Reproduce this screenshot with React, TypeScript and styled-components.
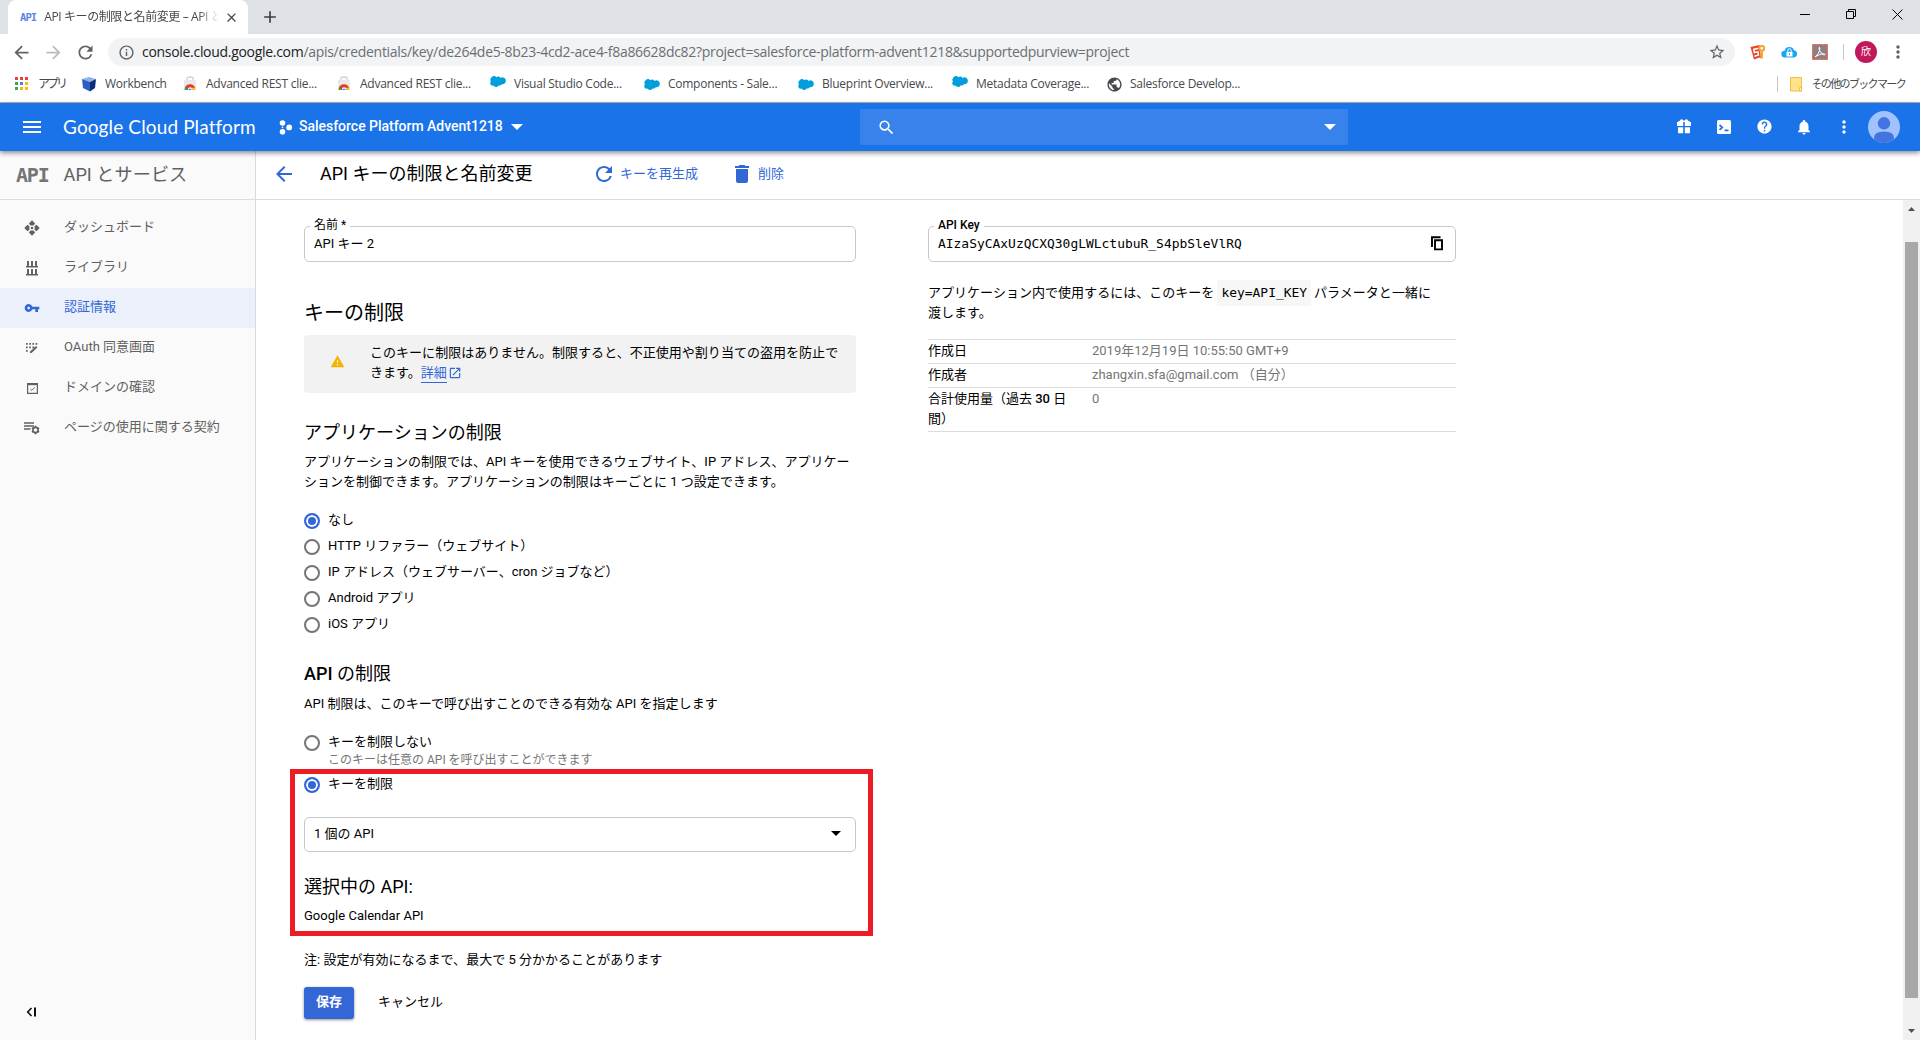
import React from "react";
import styled, { createGlobalStyle } from "styled-components";
import {
  MdArrowBack, MdArrowForward, MdRefresh, MdInfoOutline, MdStarBorder, MdMoreVert, MdClose, MdAdd,
  MdMenu, MdSearch, MdHelp, MdNotifications, MdDelete, MdVpnKey, MdWarning, MdOpenInNew, MdPublic,
} from "react-icons/md";

const GlobalStyle = createGlobalStyle`
  *, *::before, *::after { box-sizing: border-box; }
  body { margin: 0; background: #fff; overflow: hidden; }
  svg { display: block; flex: none; }
`;

const UI_FONT = `"Open Sans", "Noto Sans CJK JP", sans-serif`;
const PAGE_FONT = `Roboto, "Noto Sans CJK JP", sans-serif`;
const MONO_FONT = `"DejaVu Sans Mono", "Noto Sans CJK JP", monospace`;
const BLUE = "#3367d6";

const Window = styled.div`
  width: 1920px;
  height: 1040px;
  display: flex;
  flex-direction: column;
  overflow: hidden;
  font-family: ${PAGE_FONT};
  font-size: 13px;
  line-height: 20px;
  color: #000;
  white-space: nowrap;
`;

/* ---------- browser frame ---------- */

const TabStrip = styled.div`
  height: 34px;
  flex: none;
  display: flex;
  background: #dee1e6;
  padding-left: 8px;
  font-family: ${UI_FONT};
`;

const Tab = styled.div`
  width: 240px;
  display: flex;
  align-items: center;
  background: #fff;
  border-radius: 8px 8px 0 0;
  padding: 0 9px 0 12px;
  color: #45494d;
`;

const TabTitle = styled.div`
  flex: 1;
  margin: 0 5px 0 8px;
  overflow: hidden;
  font-size: 12px;
  letter-spacing: -0.4px;
  mask-image: linear-gradient(to right, #000 88%, transparent 100%);
`;

const NewTab = styled.div`
  display: flex;
  align-items: center;
  padding-left: 12px;
  color: #3c4043;
`;

const WindowButtons = styled.div`
  margin-left: auto;
  display: flex;
  align-items: center;
  gap: 35px;
  height: 28px;
  padding-right: 17px;
`;

const ApiMark = styled.span<{ $size: number; $color: string; $squeeze: number }>`
  font-family: ${MONO_FONT};
  font-weight: 700;
  font-size: ${(p) => p.$size}px;
  color: ${(p) => p.$color};
  letter-spacing: ${(p) => p.$squeeze}px;
`;

const Toolbar = styled.div`
  height: 36px;
  flex: none;
  display: flex;
  align-items: center;
  padding-left: 11px;
  color: #5f6368;
  font-family: ${UI_FONT};
`;

const NavButton = styled.div<{ $dim?: boolean }>`
  width: 32px;
  flex: none;
  display: flex;
  color: ${(p) => (p.$dim ? "#babcbe" : "#5f6368")};
`;

const Omnibox = styled.div`
  width: 1627px;
  flex: none;
  height: 28px;
  margin-left: 1px;
  border-radius: 14px;
  background: #f1f3f4;
  display: flex;
  align-items: center;
  padding: 0 9px 0 10px;
`;

const Url = styled.div`
  flex: 1;
  margin-left: 7px;
  font-size: 14px;
  letter-spacing: -0.3px;
  color: #6b6f73;

  b {
    font-weight: 400;
    color: #202124;
  }
`;

const Extensions = styled.div`
  flex: 1;
  display: flex;
  align-items: center;
  padding-left: 15px;
`;

const ExtensionSlot = styled.div`
  width: 31px;
`;

const VerticalRule = styled.div`
  width: 1px;
  height: 16px;
  background: #c6c9cc;
`;

const Profile = styled.div`
  width: 22px;
  flex: none;
  height: 22px;
  margin-left: 11px;
  border-radius: 50%;
  background: #c2185b;
  color: #fff;
  font-size: 10px;
  line-height: 21px;
  text-align: center;
`;

const BookmarksBar = styled.div`
  height: 33px;
  flex: none;
  display: flex;
  align-items: center;
  padding: 0 15px 4px;
  border-bottom: 1px solid #b1b3b5;
  font-family: ${UI_FONT};
  font-size: 12px;
  color: #46494d;
`;

const Bookmark = styled.div<{ $width?: number; $gap?: number; $tight?: number }>`
  width: ${(p) => (p.$width ? `${p.$width}px` : "auto")};
  display: flex;
  align-items: center;
  gap: ${(p) => p.$gap ?? 8}px;
  letter-spacing: ${(p) => p.$tight ?? -0.26}px;
`;

const OtherBookmarks = styled.div`
  margin-left: auto;
  display: flex;
  align-items: center;
  gap: 12px;
`;

const FolderLabel = styled.span`
  margin-left: -3px;
  font-size: 11px;
  letter-spacing: -1.65px;
`;

const Raised = styled.span`
  padding-bottom: 5px;
`;

/* ---------- platform bar ---------- */

const PlatformBar = styled.header`
  position: relative;
  z-index: 2;
  height: 48px;
  flex: none;
  display: flex;
  align-items: center;
  padding: 0 20px;
  background: #1a73e8;
  color: #fff;
  box-shadow: 0 2px 5px rgba(0, 0, 0, 0.45);
`;

const Brand = styled.div`
  width: 216px;
  margin-left: 19px;
  font-family: Lato, sans-serif;
  font-size: 19px;
  letter-spacing: 0.12px;
`;

const Project = styled.div`
  width: 581px;
  display: flex;
  align-items: center;
  font-weight: 500;
  font-size: 14px;
  letter-spacing: -0.02px;
`;

const ProjectName = styled.span`
  width: 212px;
  margin-left: 6px;
  padding-bottom: 2px;
`;

const SearchBox = styled.div`
  width: 488px;
  height: 36px;
  display: flex;
  align-items: center;
  justify-content: space-between;
  padding: 0 12px 0 17px;
  border-radius: 2px;
  background: #3783eb;
`;

const PlatformTools = styled.div`
  margin-left: auto;
  display: flex;
  align-items: center;
`;

const ToolSlot = styled.div`
  width: 40px;
  display: flex;
  justify-content: center;
  padding-bottom: 1px;
`;

const AvatarSlot = styled.div`
  margin-left: 4px;
`;

const Caret = styled.i<{ $w?: number }>`
  width: 0;
  height: 0;
  border: ${(p) => p.$w ?? 6}px solid transparent;
  border-top-color: currentColor;
  border-bottom: 0;
`;

/* ---------- body ---------- */

const Body = styled.div`
  flex: 1;
  min-height: 0;
  display: flex;
`;

const Sidebar = styled.nav`
  width: 256px;
  flex: none;
  display: flex;
  flex-direction: column;
  background: #fafafa;
  border-right: 1px solid #dadada;
`;

const SidebarHeader = styled.div`
  height: 49px;
  flex: none;
  display: flex;
  align-items: center;
  margin-bottom: 8px;
  padding: 0 0 1px 16px;
  border-bottom: 1px solid #dcdcdc;
  font-size: 18.200px;
  color: #616161;
`;

const SectionName = styled.span`
  margin-left: 15px;
`;

const NavItem = styled.div<{ $active?: boolean }>`
  height: 40px;
  display: flex;
  align-items: center;
  background: ${(p) => (p.$active ? "#ebf0fa" : "transparent")};
  color: ${(p) => (p.$active ? BLUE : "#616161")};
`;

const NavIcon = styled.span`
  width: 64px;
  display: flex;
  justify-content: center;
  color: inherit;
`;

const NavLabel = styled.span`
  padding-bottom: 3px;
`;

const Collapse = styled.div`
  margin-top: auto;
  padding: 0 0 23px 26px;
`;

const Main = styled.main`
  flex: 1;
  display: flex;
  flex-direction: column;
`;

const ActionBar = styled.div`
  height: 49px;
  flex: none;
  display: flex;
  align-items: center;
  padding: 0 0 2px 16px;
  border-bottom: 1px solid #dcdcdc;
  color: ${BLUE};
`;

const PageTitle = styled.h1`
  width: 272px;
  margin: 0 0 0 24px;
  font-size: 18px;
  font-weight: 400;
  color: #000;
`;

const Action = styled.div<{ $width: number }>`
  width: ${(p) => p.$width}px;
  display: flex;
  align-items: center;
  gap: 4px;
`;

const Scroller = styled.div`
  flex: 1;
  min-height: 0;
  display: flex;
`;

const Content = styled.div`
  flex: 1;
  display: flex;
  align-items: flex-start;
  gap: 72px;
  padding: 26px 0 0 48px;
`;

const Scrollbar = styled.div`
  width: 17px;
  display: flex;
  flex-direction: column;
  align-items: center;
  justify-content: space-between;
  padding: 7px 0;
  background: #f0f0f0;
  color: #505050;
`;

const Thumb = styled.div`
  width: 13px;
  height: 756px;
  margin: 31px 0 auto;
  background: #a8a8a8;
`;

const FormColumn = styled.form`
  width: 552px;
`;

const Field = styled.div`
  position: relative;
  height: 36px;
  display: flex;
  align-items: center;
  justify-content: space-between;
  padding: 0 12px 1px 9px;
  border: 1px solid #c8c8c8;
  border-radius: 5px;
`;

const FieldLabel = styled.label<{ $bold?: boolean }>`
  position: absolute;
  left: 5px;
  top: -10px;
  padding: 0 4px;
  background: #fff;
  font-size: 12px;
  line-height: 16px;
  font-weight: ${(p) => (p.$bold ? 500 : 400)};
`;

const Heading = styled.h2<{ $size?: number; $top: number; $bottom: number }>`
  margin: ${(p) => p.$top}px 0 ${(p) => p.$bottom}px;
  font-size: ${(p) => p.$size ?? 18}px;
  font-weight: 400;
  line-height: 24px;

  strong {
    font-weight: 500;
  }
`;

const Notice = styled.div`
  height: 58px;
  display: flex;
  align-items: center;
  padding: 0 0 2px 26px;
  border-radius: 4px;
  background: #f2f2f2;
`;

const NoticeIcon = styled.span`
  padding-bottom: 4px;
  color: #f4b400;
`;

const NoticeText = styled.p`
  margin: 0 0 0 25px;
  letter-spacing: 0.03px;
`;

const DetailLink = styled.a`
  display: inline-flex;
  align-items: center;
  gap: 1px;
  color: ${BLUE};
  vertical-align: top;
  height: 20px;
`;

const LinkText = styled.span`
  line-height: 19px;
  border-bottom: 1px solid ${BLUE};
`;

const Paragraph = styled.p<{ $bottom?: number }>`
  margin: 0 0 ${(p) => p.$bottom ?? 0}px;
  letter-spacing: 0.02px;
`;

const RadioRow = styled.label`
  height: 26px;
  display: flex;
  align-items: center;
  gap: 8px;
`;

const RadioDot = styled.span<{ $on?: boolean }>`
  width: 16px;
  height: 16px;
  flex: none;
  border-radius: 50%;
  border: 2px solid ${(p) => (p.$on ? BLUE : "#757575")};
  background: ${(p) => (p.$on ? BLUE : "#fff")};
  box-shadow: inset 0 0 0 2px #fff;
`;

const RadioText = styled.span`
  padding-bottom: 2px;
`;

const Hint = styled.div`
  height: 16px;
  padding-left: 24px;
  font-size: 12px;
  line-height: 9px;
  color: #757575;
`;

const RestrictedGroup = styled.section`
  position: relative;
`;

const Highlight = styled.div`
  position: absolute;
  left: -14px;
  top: -3px;
  width: 583px;
  height: 167px;
  border: 5px solid #ed1c24;
`;

const Select = styled(Field)`
  margin-top: 19px;
  height: 35px;
  padding: 0 14px 2px 9px;
`;

const Buttons = styled.div`
  display: flex;
  align-items: center;
  gap: 24px;
`;

const SaveButton = styled.div`
  width: 50px;
  height: 32px;
  border-radius: 3px;
  background: ${BLUE};
  box-shadow: 0 1px 3px rgba(0, 0, 0, 0.45);
  color: #fff;
  font-weight: 700;
  line-height: 30px;
  text-align: center;
`;

const CancelButton = styled.div`
  padding-bottom: 2px;
`;

const InfoColumn = styled.aside`
  width: 528px;
`;

const KeyValue = styled.span`
  font-family: ${MONO_FONT};
  font-size: 12.95px;
`;

const Usage = styled.p`
  margin: 21px 0 16px;
  letter-spacing: 0.03px;
`;

const Code = styled.code`
  display: inline-block;
  height: 26px;
  margin: -3px 3px;
  padding: 0 4px;
  background: #f7f7f7;
  font-family: ${MONO_FONT};
  font-size: 12.95px;
  letter-spacing: 0;
  line-height: 26px;
`;

const Details = styled.dl`
  margin: 0;
  border-top: 1px solid #dcdcdc;
`;

const DetailRow = styled.div`
  display: grid;
  grid-template-columns: 164px 1fr;
  padding: 1px 0 2px;
  border-bottom: 1px solid #dcdcdc;
`;

const Term = styled.dt`
  width: 142px;
  white-space: normal;

  strong {
    font-weight: 500;
  }
`;

const Value = styled.dd`
  margin: 0;
  color: #757575;
`;

/* ---------- drawings ---------- */

const AppsGrid = () => (
  <svg width="14" height="14" viewBox="0 0 14 14">
    {["#ea4335", "#ea4335", "#ea4335", "#34a853", "#4285f4", "#fbbc05", "#34a853", "#fbbc05", "#fbbc05"].map((c, i) => (
      <rect key={i} x={(i % 3) * 5} y={Math.floor(i / 3) * 5} width="3" height="3" fill={c} />
    ))}
  </svg>
);

const Cube = () => (
  <svg width="16" height="16" viewBox="0 0 16 16">
    <path d="M1 3l7-2 7 2-6 3z" fill="#8fb4ea" />
    <path d="M1 3l8 3v9.500L2 12z" fill="#2a5fc4" />
    <path d="M9 6l6-3-1 9-5 3.500z" fill="#0b2f7c" />
  </svg>
);

const WebStore = () => (
  <svg width="14" height="16" viewBox="0 0 14 16">
    <path d="M4 4V2.500Q4 1 7 1t3 1.500V4" fill="none" stroke="#cfcfcf" strokeWidth="1.300" />
    <path d="M1 4h12v10H1z" fill="#e9e9e9" />
    <path d="M1.500 14a5.500 5.500 0 0 1 11 0z" fill="#fbc116" />
    <path d="M1.500 14A5.500 5.500 0 0 1 4 9.300L6 14z" fill="#2aa24c" />
    <path d="M2.200 11.300a5.300 5.300 0 0 1 9.800 .5H7L4.500 13z" fill="#e33b2e" />
    <circle cx="7" cy="13.200" r="2" fill="#fff" />
    <path d="M5.400 14a1.600 1.600 0 1 1 3.200 0z" fill="#4285f4" />
  </svg>
);

const Cloud = () => (
  <svg width="16" height="11" viewBox="0 0 16 11">
    <path d="M1 5.500A3 3 0 0 1 1.400 1.600 3 3 0 0 1 6.300 1.200 2.900 2.900 0 0 1 10.600 1.900 3.300 3.300 0 0 1 15.800 5 3.200 3.200 0 0 1 11.800 8.200 2.700 2.700 0 0 1 8.600 9.400 3 3 0 0 1 3.400 9.500 2.400 2.400 0 0 1 1 5.500z" fill="#009edb" />
  </svg>
);

const Folder = () => (
  <svg width="13" height="15" viewBox="0 0 13 15">
    <path d="M.5.500h11v13.500H.5z" fill="#ffe28a" stroke="#e9c246" />
    <path d="M9.500 14v-3.500h2V14z" fill="#fff0b8" stroke="#e9c246" />
  </svg>
);

const KeyExtension = () => (
  <svg width="16" height="16" viewBox="0 0 16 16">
    <path d="M.5 3l9-2 1.500 12-7 2.500z" fill="#e8432e" />
    <path d="M8.500 4.200L3.800 5.400l.5 3.200 3.700-.8.5 3.200-4 1.200" fill="none" stroke="#fff" strokeWidth="1.500" />
    <circle cx="11.800" cy="4.300" r="2.400" fill="#fff" stroke="#f3a42a" strokeWidth="2" />
    <path d="M12 7v7.500M12 11h-2M12 13.500h-2" stroke="#f3a42a" strokeWidth="1.800" />
  </svg>
);

const CloudLock = () => (
  <svg width="17" height="12" viewBox="0 0 17 12">
    <path d="M4 11.500a3.400 3.400 0 0 1-.5-6.800A5 5 0 0 1 13 4.200a3.700 3.700 0 0 1 0 7.300z" fill="#1aa7f2" />
    <path d="M5.500 6h6v4.500h-6z" fill="#fff" />
    <path d="M6.800 6V4.500a1.700 1.700 0 0 1 3.400 0V6" fill="none" stroke="#fff" />
    <path d="M8.500 7.300v1.800" stroke="#1aa7f2" />
  </svg>
);

const Acrobat = () => (
  <svg width="16" height="16" viewBox="0 0 16 16">
    <path d="M.5.500h15v15H.5z" fill="#8c8080" stroke="#e8725f" />
    <path d="M3.200 12.800Q6.500 10.500 7.600 6.500 8.200 3.200 7.300 3.200 6.400 3.500 7.600 6.500 9 9.800 12 11q1.300 0 .8-1-3-1-9.600 2.800z" fill="none" stroke="#fff" />
  </svg>
);

const Minimize = () => (
  <svg width="10" height="10" viewBox="0 0 10 10"><path d="M0 5.500h10" stroke="#000" /></svg>
);
const Restore = () => (
  <svg width="12" height="10" viewBox="0 0 12 10">
    <path d="M1.500 2.500h7v7h-7zM3.500 2.500v-2h7v7h-2" fill="none" stroke="#000" />
  </svg>
);
const CloseWindow = () => (
  <svg width="11" height="11" viewBox="0 0 11 11"><path d="M.5.500l10 10M10.500.5l-10 10" stroke="#000" /></svg>
);

const ProjectDots = () => (
  <svg width="14" height="15" viewBox="0 0 14 15" fill="#fff">
    <circle cx="3.500" cy="3" r="2.800" />
    <circle cx="3.500" cy="11.700" r="2.800" />
    <circle cx="10.200" cy="7.400" r="2.900" />
    <circle cx="3.500" cy="7.400" r=".8" />
  </svg>
);

const Gift = () => (
  <svg width="14" height="15" viewBox="0 0 14 15" fill="#fff">
    <path d="M3 1.800Q3 .3 4.500.3 6 .3 7 1.900 8 .3 9.500.3 11 .3 11 1.800L12.500 1.900V3H1.500V1.900z" />
    <path d="M0 3h6.200v4H0zM7.800 3H14v4H7.800zM1 8.300h5.200v6H1zM7.800 8.300H13v6H7.800z" />
  </svg>
);

const Shell = () => (
  <svg width="14" height="14" viewBox="0 0 14 14">
    <rect width="14" height="14" rx="1.500" fill="#fff" />
    <path d="M2.500 5l2.800 2.400-2.800 2.400M7.500 10.300h4" fill="none" stroke="#1a73e8" strokeWidth="1.700" />
  </svg>
);

const Avatar = () => (
  <svg width="32" height="32" viewBox="0 0 32 32">
    <clipPath id="avatar"><circle cx="16" cy="16" r="16" /></clipPath>
    <g clipPath="url(#avatar)">
      <path d="M0 0h32v32H0z" fill="#a0c2ff" />
      <circle cx="16" cy="12.300" r="6.200" fill="#4374e0" />
      <path d="M6 27q0-6.500 10-6.500T26 27v5H6z" fill="#4374e0" />
    </g>
  </svg>
);

const DashboardIcon = () => (
  <svg width="16" height="16" viewBox="0 0 16 16" fill="currentColor">
    <path d="M8 .3l2.900 2.900v.9L9.400 5.400H6.600L5.100 4.100v-.9z" />
    <path d="M8 .3l2.900 2.900v.9L9.400 5.400H6.600L5.100 4.100v-.9z" transform="rotate(90 8 8)" />
    <path d="M8 .3l2.900 2.900v.9L9.400 5.400H6.600L5.100 4.100v-.9z" transform="rotate(180 8 8)" />
    <path d="M8 .3l2.900 2.900v.9L9.400 5.400H6.600L5.100 4.100v-.9z" transform="rotate(270 8 8)" />
    <circle cx="8" cy="8" r="1.300" />
  </svg>
);

const LibraryIcon = () => (
  <svg width="12" height="15" viewBox="0 0 12 15" fill="currentColor">
    <path d="M1 0h2v5h2V0h2v5h2V0h2v5h1v1.400H0V5h1zM1 8h2v5h2V8h2v5h2V8h2v5h1v1.400H0V13h1z" />
  </svg>
);

const ConsentIcon = () => (
  <svg width="12" height="12" viewBox="0 0 12 12" fill="currentColor">
    <path d="M0 1h1.700v1.700H0zM3.200 1h1.700v1.700H3.200zM6.400 1h1.700v1.700H6.400zM9.600 1h1.700v1.700H9.600zM0 4.500h1.700v1.700H0zM3.200 4.500h1.700v1.700H3.200zM6.400 4.500h1.700v1.700H6.400zM0 8h1.700v1.700H0z" />
    <path d="M4 11V9.500L10 4l1.400 1.500L5.500 11z" />
  </svg>
);

const DomainIcon = () => (
  <svg width="11" height="11" viewBox="0 0 11 11" fill="none" stroke="currentColor">
    <path d="M.6.600h9.800v9.800H.6z" strokeWidth="1.200" />
    <path d="M.6 1.400h9.800" strokeWidth="1.600" />
    <path d="M3.200 5.800l1.600 1.600 3-3" />
  </svg>
);

const AgreementIcon = () => (
  <svg width="16" height="14" viewBox="0 0 16 14" fill="none" stroke="currentColor">
    <path d="M0 1.900h10M0 4.900h10M0 7.900h6.500" strokeWidth="1.500" />
    <circle cx="11.500" cy="9" r="2.600" strokeWidth="1.600" />
    <path d="M11.500 4.800v1.500M11.500 11.700v1.500M7.900 6.900l1.300.8M13.800 10.300l1.300.8M7.900 11.100l1.300-.8M13.800 7.700l1.300-.8" strokeWidth="1.700" />
  </svg>
);

const CopyIcon = () => (
  <svg width="12" height="15" viewBox="0 0 12 15" fill="none" stroke="#000" strokeWidth="1.900">
    <path d="M1 11V1.200h8.500M4 4.200h7v9.200H4z" />
  </svg>
);

const CollapseIcon = () => (
  <svg width="11" height="10" viewBox="0 0 11 10" fill="none" stroke="#111">
    <path d="M5.500 1L1.700 5l3.800 4" strokeWidth="1.600" />
    <path d="M9 .5v9" strokeWidth="2" />
  </svg>
);

const ScrollArrow = ({ down }: { down?: boolean }) => (
  <svg width="7" height="4" viewBox="0 0 7 4" fill="currentColor">
    <path d={down ? "M0 0h7L3.500 4z" : "M0 4h7L3.500 0z"} />
  </svg>
);

/* ---------- data ---------- */

const bookmarks = [
  { icon: <Cube />, label: "Workbench", width: 102, gap: 8 },
  { icon: <WebStore />, label: "Advanced REST clie...", width: 154, gap: 9 },
  { icon: <WebStore />, label: "Advanced REST clie...", width: 153, gap: 9 },
  { icon: <Raised><Cloud /></Raised>, label: "Visual Studio Code...", width: 154 },
  { icon: <Cloud />, label: "Components - Sale...", width: 154 },
  { icon: <Cloud />, label: "Blueprint Overview...", width: 154 },
  { icon: <Raised><Cloud /></Raised>, label: "Metadata Coverage...", width: 154 },
  { icon: <MdPublic size={17} />, label: "Salesforce Develop...", width: 150, gap: 7 },
];

const navItems = [
  { icon: <DashboardIcon />, label: "ダッシュボード" },
  { icon: <LibraryIcon />, label: "ライブラリ" },
  { icon: <MdVpnKey size={16} />, label: "認証情報", active: true },
  { icon: <ConsentIcon />, label: "OAuth 同意画面" },
  { icon: <DomainIcon />, label: "ドメインの確認" },
  { icon: <AgreementIcon />, label: "ページの使用に関する契約" },
];

const appRestrictions = [
  "なし",
  "HTTP リファラー（ウェブサイト）",
  "IP アドレス（ウェブサーバー、cron ジョブなど）",
  "Android アプリ",
  "iOS アプリ",
];

const details = [
  { term: "作成日", value: "2019年12月19日 10:55:50 GMT+9" },
  { term: "作成者", value: "zhangxin.sfa@gmail.com （自分）" },
  { term: <>合計使用量（過去 <strong>30</strong> 日間）</>, value: "0" },
];

const Radio = ({ label, on }: { label: string; on?: boolean }) => (
  <RadioRow>
    <RadioDot $on={on} />
    <RadioText>{label}</RadioText>
  </RadioRow>
);

function BrowserFrame() {
  return (
    <>
      <TabStrip>
        <Tab>
          <ApiMark $size={10.5} $color="#5a86e0" $squeeze={-0.9}>API</ApiMark>
          <TabTitle>API キーの制限と名前変更 – API とサ</TabTitle>
          <MdClose size={15} />
        </Tab>
        <NewTab><MdAdd size={20} /></NewTab>
        <WindowButtons><Minimize /><Restore /><CloseWindow /></WindowButtons>
      </TabStrip>
      <Toolbar>
        <NavButton><MdArrowBack size={21} /></NavButton>
        <NavButton $dim><MdArrowForward size={21} /></NavButton>
        <NavButton><MdRefresh size={21} /></NavButton>
        <Omnibox>
          <MdInfoOutline size={17} />
          <Url>
            <b>console.cloud.google.com</b>
            /apis/credentials/key/de264de5-8b23-4cd2-ace4-f8a86628dc82?project=salesforce-platform-advent1218&amp;supportedpurview=project
          </Url>
          <MdStarBorder size={18} />
        </Omnibox>
        <Extensions>
          <ExtensionSlot><KeyExtension /></ExtensionSlot>
          <ExtensionSlot><CloudLock /></ExtensionSlot>
          <ExtensionSlot><Acrobat /></ExtensionSlot>
          <VerticalRule />
          <Profile>欣</Profile>
        </Extensions>
        <NavButton><MdMoreVert size={20} /></NavButton>
      </Toolbar>
      <BookmarksBar>
        <Bookmark $width={66} $gap={9} $tight={-3}><AppsGrid />アプリ</Bookmark>
        {bookmarks.map((b, i) => (
          <Bookmark key={i} $width={b.width} $gap={b.gap}>{b.icon}{b.label}</Bookmark>
        ))}
        <OtherBookmarks>
          <VerticalRule />
          <Folder />
          <FolderLabel>その他のブックマーク</FolderLabel>
        </OtherBookmarks>
      </BookmarksBar>
    </>
  );
}

function PlatformHeader() {
  return (
    <PlatformBar>
      <MdMenu size={24} />
      <Brand>Google Cloud Platform</Brand>
      <Project>
        <ProjectDots />
        <ProjectName>Salesforce Platform Advent1218</ProjectName>
        <Caret />
      </Project>
      <SearchBox>
        <MdSearch size={19} />
        <Caret />
      </SearchBox>
      <PlatformTools>
        <ToolSlot><Gift /></ToolSlot>
        <ToolSlot><Shell /></ToolSlot>
        <ToolSlot><MdHelp size={17} /></ToolSlot>
        <ToolSlot><MdNotifications size={18} /></ToolSlot>
        <ToolSlot><MdMoreVert size={20} /></ToolSlot>
        <AvatarSlot><Avatar /></AvatarSlot>
      </PlatformTools>
    </PlatformBar>
  );
}

function KeyForm() {
  return (
    <FormColumn>
      <Field>
        <FieldLabel>名前 *</FieldLabel>
        API キー 2
      </Field>
      <Heading $size={20} $top={39} $bottom={10}>キーの制限</Heading>
      <Notice>
        <NoticeIcon><MdWarning size={15} /></NoticeIcon>
        <NoticeText>
          このキーに制限はありません。制限すると、不正使用や割り当ての盗用を防止で
          <br />
          きます。
          <DetailLink><LinkText>詳細</LinkText><MdOpenInNew size={14} /></DetailLink>
        </NoticeText>
      </Notice>
      <Heading $top={28} $bottom={7}>アプリケーションの制限</Heading>
      <Paragraph $bottom={16}>
        アプリケーションの制限では、API キーを使用できるウェブサイト、IP アドレス、アプリケー
        <br />
        ションを制御できます。アプリケーションの制限はキーごとに 1 つ設定できます。
      </Paragraph>
      {appRestrictions.map((label, i) => <Radio key={label} label={label} on={i === 0} />)}
      <Heading $top={24} $bottom={8}><strong>API</strong> の制限</Heading>
      <Paragraph $bottom={16}>API 制限は、このキーで呼び出すことのできる有効な API を指定します</Paragraph>
      <Radio label="キーを制限しない" />
      <Hint>このキーは任意の API を呼び出すことができます</Hint>
      <RestrictedGroup>
        <Radio label="キーを制限" on />
        <Select>1 個の API<Caret $w={5} /></Select>
        <Heading $top={23} $bottom={7}>選択中の API:</Heading>
        <Paragraph $bottom={24}>Google Calendar API</Paragraph>
        <Highlight />
      </RestrictedGroup>
      <Paragraph $bottom={17}>注: 設定が有効になるまで、最大で 5 分かかることがあります</Paragraph>
      <Buttons>
        <SaveButton>保存</SaveButton>
        <CancelButton>キャンセル</CancelButton>
      </Buttons>
    </FormColumn>
  );
}

function KeyInfo() {
  return (
    <InfoColumn>
      <Field>
        <FieldLabel $bold>API Key</FieldLabel>
        <KeyValue>AIzaSyCAxUzQCXQ30gLWLctubuR_S4pbSleVlRQ</KeyValue>
        <CopyIcon />
      </Field>
      <Usage>
        アプリケーション内で使用するには、このキーを<Code>key=API_KEY</Code>パラメータと一緒に
        <br />
        渡します。
      </Usage>
      <Details>
        {details.map(({ term, value }) => (
          <DetailRow key={value}>
            <Term>{term}</Term>
            <Value>{value}</Value>
          </DetailRow>
        ))}
      </Details>
    </InfoColumn>
  );
}

export default function App() {
  return (
    <Window>
      <GlobalStyle />
      <BrowserFrame />
      <PlatformHeader />
      <Body>
        <Sidebar>
          <SidebarHeader>
            <ApiMark $size={20} $color="#757575" $squeeze={-1.2}>API</ApiMark>
            <SectionName>API とサービス</SectionName>
          </SidebarHeader>
          {navItems.map((item) => (
            <NavItem key={item.label} $active={item.active}>
              <NavIcon>{item.icon}</NavIcon>
              <NavLabel>{item.label}</NavLabel>
            </NavItem>
          ))}
          <Collapse><CollapseIcon /></Collapse>
        </Sidebar>
        <Main>
          <ActionBar>
            <MdArrowBack size={24} />
            <PageTitle>API キーの制限と名前変更</PageTitle>
            <Action $width={138}><MdRefresh size={24} />キーを再生成</Action>
            <Action $width={80}><MdDelete size={24} />削除</Action>
          </ActionBar>
          <Scroller>
            <Content>
              <KeyForm />
              <KeyInfo />
            </Content>
            <Scrollbar>
              <ScrollArrow />
              <Thumb />
              <ScrollArrow down />
            </Scrollbar>
          </Scroller>
        </Main>
      </Body>
    </Window>
  );
}
